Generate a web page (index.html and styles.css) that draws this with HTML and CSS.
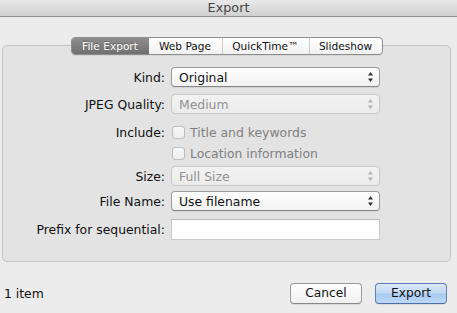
FILE: index.html
```html
<!DOCTYPE html>
<html>
<head>
<meta charset="utf-8">
<title>Export</title>
<link rel="stylesheet" href="styles.css">
</head>
<body>
<div class="window">
  <div class="titlebar">Export</div>
  <div class="content">
    <div class="tabs">
      <div class="tab tab-selected w1">File Export</div>
      <div class="tab w2">Web Page</div>
      <div class="tab tab-sep w3">QuickTime™</div>
      <div class="tab tab-sep w4">Slideshow</div>
    </div>
    <div class="group">
      <div class="row r-kind">
        <div class="label">Kind:</div>
        <div class="popup">
          <span class="ptext">Original</span>
          <svg class="arrows" width="5" height="10" viewBox="0 0 5 10"><path d="M0 3.5 L2.5 0 L5 3.5 Z M0 6.5 L2.5 10 L5 6.5 Z"/></svg>
        </div>
      </div>
      <div class="row r-jpeg">
        <div class="label">JPEG Quality:</div>
        <div class="popup disabled">
          <span class="ptext">Medium</span>
          <svg class="arrows" width="5" height="10" viewBox="0 0 5 10"><path d="M0 3.5 L2.5 0 L5 3.5 Z M0 6.5 L2.5 10 L5 6.5 Z"/></svg>
        </div>
      </div>
      <div class="row r-inc">
        <div class="label">Include:</div>
        <div class="check"><span class="box"></span><span class="ctext">Title and keywords</span></div>
      </div>
      <div class="row r-loc">
        <div class="label"></div>
        <div class="check"><span class="box"></span><span class="ctext">Location information</span></div>
      </div>
      <div class="row r-size">
        <div class="label">Size:</div>
        <div class="popup disabled">
          <span class="ptext">Full Size</span>
          <svg class="arrows" width="5" height="10" viewBox="0 0 5 10"><path d="M0 3.5 L2.5 0 L5 3.5 Z M0 6.5 L2.5 10 L5 6.5 Z"/></svg>
        </div>
      </div>
      <div class="row r-name">
        <div class="label">File Name:</div>
        <div class="popup">
          <span class="ptext">Use filename</span>
          <svg class="arrows" width="5" height="10" viewBox="0 0 5 10"><path d="M0 3.5 L2.5 0 L5 3.5 Z M0 6.5 L2.5 10 L5 6.5 Z"/></svg>
        </div>
      </div>
      <div class="row r-prefix">
        <div class="label">Prefix for sequential:</div>
        <div class="field"></div>
      </div>
    </div>
  </div>
  <div class="footer">
    <div class="count">1 item</div>
    <div class="buttons">
      <div class="btn">Cancel</div>
      <div class="btn btn-default">Export</div>
    </div>
  </div>
</div>
</body>
</html>
```

FILE: styles.css
```css
html, body {
  margin: 0;
  padding: 0;
}
body {
  width: 457px;
  height: 313px;
  overflow: hidden;
  background: #ececec;
  font-family: "DejaVu Sans", "Liberation Sans", sans-serif;
  color: #111;
}
.window {
  width: 457px;
  height: 313px;
  display: flex;
  flex-direction: column;
}
.titlebar {
  height: 16px;
  line-height: 16px;
  border-bottom: 1px solid #8f8f8f;
  background: linear-gradient(#e8e8e8, #d0d0d0);
  text-align: center;
  font-size: 12.8px;
  color: #444;
}
.content {
  padding: 20px 6px 0 2px;
  display: flex;
  flex-direction: column;
}
.tabs {
  position: relative;
  z-index: 1;
  align-self: center;
  display: flex;
  height: 16px;
  border: 1px solid #8d8d8d;
  border-radius: 4px;
  background: linear-gradient(#ffffff, #f1f1f1);
  box-shadow: 0 1px 0 rgba(0,0,0,0.06);
  overflow: hidden;
  margin-left: 0;
}
.tab {
  font-size: 10.6px;
  line-height: 16px;
  text-align: center;
  color: #111;
  box-sizing: border-box;
}
.w1 { width: 77px; }
.w2 { width: 73px; }
.w3 { width: 87px; }
.w4 { width: 73px; }
.tab-sep {
  border-left: 1px solid #cbcbcb;
}
.tab-selected {
  background: linear-gradient(#8e8e8e, #6f6f6f);
  color: #fff;
  text-shadow: 0 -1px 0 rgba(0,0,0,0.25);
}
.group {
  margin-top: -10px;
  border: 1px solid #c4c4c4;
  border-radius: 5px;
  background: #e3e3e3;
  padding: 21px 0 21px 0;
  display: flex;
  flex-direction: column;
}
.row {
  display: flex;
  align-items: center;
}
.label {
  width: 162px;
  margin-right: 6px;
  text-align: right;
  font-size: 12.4px;
  color: #111;
  white-space: nowrap;
}
.r-kind { height: 20px; }
.r-jpeg { height: 20px; margin-top: 7px; }
.r-inc { height: 16px; margin-top: 10px; }
.r-loc { height: 16px; margin-top: 5px; }
.r-size { height: 20px; margin-top: 5px; }
.r-name { height: 20px; margin-top: 5px; }
.r-prefix { height: 21px; margin-top: 8px; }
.popup {
  box-sizing: border-box;
  width: 209px;
  height: 20px;
  border: 1px solid #9c9c9c;
  border-bottom-color: #868686;
  border-radius: 4px;
  background: linear-gradient(#ffffff, #f2f2f2);
  box-shadow: 0 1px 0 rgba(0,0,0,0.07);
  display: flex;
  align-items: center;
  justify-content: space-between;
  padding: 0 6px 0 7px;
}
.ptext {
  font-size: 12.4px;
  color: #111;
}
.arrows {
  fill: #333;
}
.popup.disabled {
  border-color: #c7c7c7;
  background: linear-gradient(#f2f2f2, #ececec);
  box-shadow: none;
}
.popup.disabled .ptext {
  color: #929292;
}
.popup.disabled .arrows {
  fill: #b1b1b1;
}
.check {
  display: flex;
  align-items: center;
}
.box {
  box-sizing: border-box;
  width: 13px;
  height: 13px;
  border: 1px solid #bdbdbd;
  border-radius: 3px;
  background: linear-gradient(#f8f8f8, #eeeeee);
  margin-left: 1px;
}
.ctext {
  margin-left: 5px;
  font-size: 12.4px;
  color: #808080;
}
.field {
  box-sizing: border-box;
  width: 209px;
  height: 21px;
  background: #fff;
  border: 1px solid #c9c9c9;
  border-top-color: #b9b9b9;
}
.footer {
  display: flex;
  align-items: center;
  justify-content: space-between;
  margin-top: 21px;
  height: 21px;
  padding: 0 10px 0 4px;
}
.count {
  font-size: 12.4px;
  color: #111;
}
.buttons {
  display: flex;
  gap: 13px;
}
.btn {
  box-sizing: border-box;
  width: 72px;
  height: 21px;
  line-height: 19px;
  text-align: center;
  font-size: 12.2px;
  color: #111;
  border: 1px solid #9a9a9a;
  border-bottom-color: #888;
  border-radius: 4px;
  background: linear-gradient(#ffffff, #f0f0f0);
  box-shadow: 0 1px 0 rgba(0,0,0,0.07);
}
.btn-default {
  border-color: #5d7fb8;
  border-bottom-color: #4d6ea8;
  background: linear-gradient(#dde9f8 0%, #c2d9f4 45%, #a9cbf1 55%, #bcd8f7 100%);
}
```
